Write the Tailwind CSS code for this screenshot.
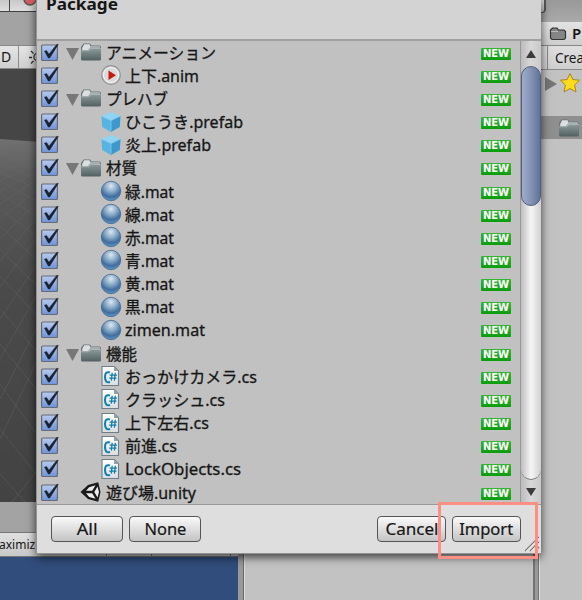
<!DOCTYPE html>
<html lang="ja"><head><meta charset="utf-8"><title>Import Package</title>
<script src="https://cdn.jsdelivr.net/npm/@tailwindcss/browser@4"></script></head>
<body class="w-[582px] h-[600px] overflow-hidden bg-[#c2c2c2] font-['Noto_Sans','Noto_Sans_CJK_JP',sans-serif] text-[#161616]">
<svg width="0" height="0" class="absolute"><defs>
<linearGradient id="gf" x1="0" y1="0" x2="0" y2="1"><stop offset="0" stop-color="#8d9c9d"/><stop offset="1" stop-color="#536062"/></linearGradient>
<linearGradient id="gc" x1="0" y1="0" x2="0" y2="1"><stop offset="0" stop-color="#b7cbee"/><stop offset="1" stop-color="#6f93d8"/></linearGradient>
<radialGradient id="gb" cx=".5" cy=".24" r=".75"><stop offset="0" stop-color="#dce8f1"/><stop offset=".4" stop-color="#8aacca"/><stop offset=".75" stop-color="#406c9d"/><stop offset="1" stop-color="#5c98cb"/></radialGradient>
<linearGradient id="gp" x1="0" y1="0" x2="0" y2="1"><stop offset="0" stop-color="#fff"/><stop offset="1" stop-color="#d8dde0"/></linearGradient>
<symbol id="check" viewBox="0 0 20 20"><rect x="1.6" y="3" width="15.8" height="15.5" rx="1" fill="url(#gc)" stroke="#646a76" stroke-width="1.2"/><path d="M4.5 9.2 6.5 8.6 9 12.3 16.7 2.4H18.3L9.7 16H8.3Z" fill="#18212e" stroke="#18212e" stroke-width=".5"/></symbol>
<symbol id="folder" viewBox="0 0 22 20"><path d="M1 17V5L3.5 1.5H10L11.5 3.5H20L21 5V17Z" fill="#6b7779"/><path d="M2.2 6 4.2 2.3H9.5L10.5 4.5H19.5V8H2.2Z" fill="#dcdfdf"/><path d="M10.5 4.5H20V8H8Z" fill="#a5afb0"/><path d="M1 8.5H8.5L11 6H21V17Q21 18.5 19.5 18.5H2.5Q1 18.5 1 17Z" fill="url(#gf)"/><path d="M1.5 8.7H8.7L11.2 6.4H20.5" fill="none" stroke="#b7c1c2" stroke-width=".8"/></symbol>
<symbol id="anim" viewBox="0 0 22 22"><circle cx="11" cy="11" r="9.3" fill="#dadada" stroke="#929292" stroke-width="1.2"/><circle cx="11" cy="11" r="7.5" fill="none" stroke="#f3f3f3" stroke-width="1"/><path d="M8.5 6.5 16 11.3 8.5 16Z" fill="#c91712"/></symbol>
<symbol id="cube" viewBox="0 0 22 22"><path d="M11 1 20.5 5 11 9.5 1.5 5Z" fill="#8fd4f3"/><path d="M1.5 5 11 9.5V21L2.2 16Z" fill="#56b4e2"/><path d="M20.5 5 11 9.5V21L19.8 16Z" fill="#3f98cd"/><path d="M1.8 5.2 11 9.5 20.2 5.2M11 9.5V20" fill="none" stroke="#8bd0ee" stroke-width=".7"/></symbol>
<symbol id="ball" viewBox="0 0 22 22"><circle cx="11" cy="11" r="9.7" fill="url(#gb)" stroke="#42658a" stroke-width=".8"/></symbol>
<symbol id="cs" viewBox="0 0 22 22"><path d="M2 1.5H14.2L18.5 5.8V20.5H2Z" fill="url(#gp)" stroke="#6f7e89" stroke-width="1.1"/><path d="M14 1.5V6H18.5Z" fill="#96a2aa"/><path d="M10 7.4Q5 6 5 12Q5 18.4 10 17" fill="none" stroke="#107fae" stroke-width="2"/><path d="M12.2 7.8 11.3 15.6M15.3 7.8 14.4 15.6M9.6 10.2H17M9.2 13.2H16.5" fill="none" stroke="#107fae" stroke-width="1.3"/></symbol>
<symbol id="unity" viewBox="0 0 22 22"><path d="M.5 11 8 4 18.2 1.2 20.5 11 18.2 20.8 8 18Z" fill="#1a1a1a"/><path d="M9.2 6.2 15.5 4.2 12.2 9.8H6ZM6 12.2H12.2L15.5 17.7 9.2 16ZM17.5 5.4 19 11 17.5 16.6 14.3 11Z" fill="#ededed"/></symbol>
<symbol id="tri" viewBox="0 0 13 12"><path d="M0 0H13L6.5 12Z" fill="#777"/></symbol>
</defs></svg>
<div class="relative w-[582px] h-[600px] overflow-hidden">
<div class="flex h-full">
 <div class="w-[238px] flex flex-col shrink-0">
  <div class="h-3 flex bg-linear-to-b from-[#c8c8c8] to-[#dedede] border-b border-[#414141]"><div class="w-[10px] border-r border-[#444] h-full shrink-0"></div><svg class="ml-3" width="18" height="8"><circle cx="8" cy="-1" r="6" fill="#d45c63" stroke="#555" stroke-width="1.5"/></svg></div>
  <div class="h-[33px] bg-[#a3a3a3]"></div>
  <div class="h-6 flex items-center border-t border-b border-[#888] bg-linear-to-b from-[#e5e5e5] to-[#cfcfcf]"><span class="text-[14px] leading-none w-[18px] pl-[1px] shrink-0">D</span><i class="h-full w-px bg-[#8e8e8e]"></i>
   <svg width="19" height="22" viewBox="0 0 19 22" class="ml-[9px]"><circle cx="9.5" cy="11" r="3.6" fill="none" stroke="#333" stroke-width="1.2"/><path d="M1 11.5H4M3 5 5.5 7.5M3 17.5 5.5 15M9.5 3V5.5M9.5 16.5V19" stroke="#333" stroke-width="1.3"/></svg></div>
  <svg width="238" height="433" class="block bg-[#464646] shrink-0"><defs><linearGradient id="gs" x1="0" y1="0" x2="0" y2="1"><stop stop-color="#707070"/><stop offset=".12" stop-color="#5a5a5a"/><stop offset=".4" stop-color="#4a4a4a"/><stop offset="1" stop-color="#434343"/></linearGradient></defs><path d="M0 70 40 73V433H0Z" fill="url(#gs)"/><path d="M0 80 40 76M0 84 40 92M0 94 40 84M0 88 40 98M0 102 40 89M0 96 40 110M0 112 40 94M0 104 40 121M0 122 40 101M0 112 40 134M0 135 40 109M0 124 40 150M0 150 40 119M0 140 40 170M0 170 40 130M0 157 40 194M0 192 40 145M0 180 40 220M0 218 40 164M0 207 40 250M0 250 40 190M0 240 40 286M0 290 40 220M0 275 40 325M0 330 40 252M0 315 40 370M0 370 40 285M0 360 40 410M0 405 25 433M12 433 40 398" stroke="#6d6d6d" stroke-width=".6" opacity=".6"/></svg>
  <div class="h-[31px] bg-[#a3a3a3] border-b border-[#777]"></div>
  <div class="h-[24px] flex items-center overflow-hidden bg-linear-to-b from-[#e0e0e0] to-[#c8c8c8] border-b border-[#777] text-[12px]"><span class="-ml-[1px] w-[107px] shrink-0">aximiz</span><i class="w-px h-full bg-[#777]"></i><i class="ml-[44px] w-px h-full bg-[#777]"></i><i class="ml-[78px] w-px h-full bg-[#777]"></i></div>
  <div class="flex-1 bg-[#304d7b]"></div>
 </div>
 <div class="w-[6px] shrink-0 bg-[#999] border-r border-[#686868]"></div>
 <div class="w-[289px] shrink-0 bg-[#c2c2c2] border-l border-[#ddd]"></div>
 <div class="w-[6px] shrink-0 bg-[#999] border-l-2 border-r border-[#737373]"></div>
 <div class="w-[43px] shrink-0 flex flex-col bg-[#c2c2c2] border-l border-[#dedede]">
  <div class="h-[22px] bg-linear-to-b from-[#999] to-[#aaa]"><div class="w-[6px] h-[13px] border-r-2 border-b border-[#555] bg-[#ccc] rounded-br"></div></div>
  <div class="h-[23px] flex items-center bg-linear-to-b from-[#e3e3e3] to-[#cecece] pl-[9px]"><svg width="18" height="16" viewBox="0 0 18 16" class="shrink-0"><path d="M1.5 12V4L3.5 2H8L9.5 4H15L16.5 5.5V12L15 13.5H3Z" fill="#858585" stroke="#333" stroke-width="1.2"/><path d="M2 5.5H9" stroke="#bbb"/></svg><span class="ml-[5px] text-[15px] font-semibold leading-none">P</span></div>
  <div class="h-[25px] flex items-center border-t border-b border-[#888] bg-linear-to-b from-[#dfdfdf] to-[#cfcfcf]"><i class="ml-[7px] w-px h-full bg-[#888] shrink-0"></i><span class="ml-[7px] mt-[2px] text-[13.5px] whitespace-nowrap">Crea</span></div>
  <div class="h-[27px] flex items-center pl-[5px]"><svg width="12" height="14" class="shrink-0"><path d="M0 0 12 7 0 14Z" fill="#757575"/></svg><svg width="22" height="22" viewBox="0 0 22 22" class="ml-[2px] -mt-[2px] shrink-0"><path d="M11 1.5 13.8 7.5 20.5 8.2 15.6 13 17 20 11 16.6 5 20 6.4 13 1.5 8.2 8.2 7.5Z" fill="#ffda19" stroke="#a78523" stroke-width="1" stroke-linejoin="round"/></svg></div>
  <div class="h-[19px]"></div>
  <div class="h-[23px] bg-[#8f8f8f] flex items-center pl-[18px]"><svg width="22" height="20" class="shrink-0"><use href="#folder"/></svg></div>
 </div>
</div>
<section class="absolute left-[36px] top-0 w-[505px] h-[554px] flex flex-col bg-[#dedede] border-l border-b border-[#929292] shadow-[0_3px_9px_rgba(0,0,0,.7)]">
 <header class="h-[41px] shrink-0 bg-[#d3d3d3] border-b-2 border-[#a0a0a0] pl-[9px] text-[16px] font-bold leading-[20px]"><div class="-mt-[6px]"><span data-w="72" class="inline-block origin-left whitespace-nowrap">Package</span></div></header>
 <div class="h-[463px] flex shrink-0 bg-[#c1c1c1]">
  <div id="rows" class="w-[483px] flex flex-col"></div>
  <div class="w-[21px] flex flex-col items-center border-l border-[#999] bg-linear-to-r from-[#bcbcbc] via-[#d8d8d8] to-[#c9c9c9]">
   <div class="h-[25px] flex items-center pt-[1px] shrink-0"><svg width="10" height="8"><path d="M5 0 10 8H0Z" fill="#3c3c3c"/></svg></div>
   <div class="w-[20px] h-[414px] rounded-[10px] bg-linear-to-r from-[#bebebe] via-[#f6f6f6] to-[#d0d0d0] border-b border-[#777] shrink-0"><div class="h-[140px] rounded-[10px] border border-[#4e5d7e] bg-linear-to-r from-[#9eadca] via-[#8493b4] to-[#61729a]"></div></div>
   <div class="flex-1 flex items-center"><svg width="10" height="8"><path d="M0 0H10L5 8Z" fill="#3c3c3c"/></svg></div>
  </div>
 </div>
 <footer class="flex-1 flex items-start border-t border-[#999] pt-[11px] pl-[14px] text-[16px] [-webkit-text-stroke:.2px_#161616]">
  <button class="flex items-center justify-center w-[72px] h-[26px] rounded-[4px] border-[1.5px] border-[#555] bg-linear-to-b from-[#fafafa] to-[#c4c4c4] leading-none"><span data-w="21" class="inline-block whitespace-nowrap">All</span></button>
  <button class="flex items-center justify-center ml-[6px] w-[72px] h-[26px] rounded-[4px] border-[1.5px] border-[#555] bg-linear-to-b from-[#fafafa] to-[#c4c4c4] leading-none"><span data-w="42" class="inline-block whitespace-nowrap">None</span></button>
  <button class="flex items-center justify-center ml-[176px] w-[69px] h-[26px] rounded-[4px] border-[1.5px] border-[#555] bg-linear-to-b from-[#fafafa] to-[#c4c4c4] leading-none"><span data-w="53" class="inline-block whitespace-nowrap">Cancel</span></button>
  <button class="flex items-center justify-center ml-[6px] w-[69px] h-[26px] rounded-[4px] border-[1.5px] border-[#555] bg-linear-to-b from-[#fafafa] to-[#c4c4c4] leading-none"><span data-w="54" class="inline-block whitespace-nowrap">Import</span></button>
 </footer>
 <svg class="absolute right-0 bottom-0" width="18" height="17"><path d="M2 15 16 1M7 15 16 6M12 15 16 11" stroke="#777" stroke-width="1.2"/><path d="M3.5 15 17 1.5M8.5 15 17 6.5" stroke="#f5f5f5"/></svg>
</section>
<div class="absolute left-[438px] top-[502px] w-[100px] h-[57px] border-[3px] border-[#fc8e84]"></div>
</div>
<script>
const items=[["folder","アニメーション",110],["anim","上下.anim",74],["folder","プレハブ",62],["cube","ひこうき.prefab",118],["cube","炎上.prefab",86],["folder","材質",31],["ball","緑.mat",49],["ball","線.mat",49],["ball","赤.mat",49],["ball","青.mat",49],["ball","黄.mat",49],["ball","黒.mat",49],["ball","zimen.mat",80],["folder","機能",31],["cs","おっかけカメラ.cs",132],["cs","クラッシュ.cs",100],["cs","上下左右.cs",84],["cs","前進.cs",52],["cs","LockObjects.cs",116],["unity","遊び場.unity",90]];
document.getElementById("rows").innerHTML=items.map(([icon,name,w])=>{
 const f=icon==="folder",top=f||icon==="unity";
 return `<div class="flex-1 min-h-0 flex items-center"><svg width="20" height="20" class="ml-[3px] -mt-[2px] shrink-0"><use href="#check"/></svg>${f?'<svg width="13" height="12" class="ml-[6px] mt-[2px] shrink-0"><use href="#tri"/></svg>':'<i class="w-[19px] shrink-0"></i>'}${top?'<i class="w-px shrink-0"></i>':'<i class="w-[21px] shrink-0"></i>'}<svg width="22" height="${f?20:22}" class="-mt-[1px] shrink-0"><use href="#${icon}"/></svg><span class="${top?'ml-[4px]':'ml-[3px]'} w-[375px] shrink-0 text-[16px] leading-[22px] whitespace-nowrap [-webkit-text-stroke:.3px_#161616]"><span data-w="${w}" class="inline-block origin-left">${name}</span></span><b class="${top?'':'-ml-[19px]'} w-[30px] h-[12px] mt-[2px] shrink-0 rounded-[1px] bg-linear-to-b from-[#35b735] to-[#069d08] text-white text-[10px] leading-[12px] text-center font-['DejaVu_Sans',sans-serif]">NEW</b></div>`}).join("");
// Fit each label horizontally to its designed width.
function fit(){document.querySelectorAll("[data-w]").forEach(e=>{e.style.transform="none";e.style.transform=`scaleX(${e.dataset.w/e.getBoundingClientRect().width})`})}
fit();
addEventListener("load",()=>{fit();requestAnimationFrame(fit);document.fonts.ready.then(fit)});
new ResizeObserver(fit).observe(document.querySelector("header span"));
</script>
</body></html>
